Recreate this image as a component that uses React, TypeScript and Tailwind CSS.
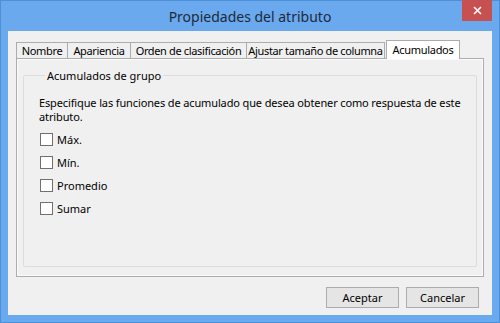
import React from "react";

const font = { fontFamily: '"Noto Sans", "Open Sans", sans-serif' };

function Tab({ label, w, selected }: { label: string; w: string; selected?: boolean }) {
  if (selected) {
    return (
      <div className={`relative z-10 -mb-[1px] ml-[1px] flex h-[19px] items-start justify-center whitespace-nowrap border border-b-0 border-[#acacac] bg-white pt-[1px] tracking-[-0.3px] ${w}`}>
        <span>{label}</span>
      </div>
    );
  }
  return (
    <div className={`-ml-[1px] flex h-[16px] items-center justify-center whitespace-nowrap border border-b-0 border-[#acacac] bg-[#f0f0f0] tracking-[-0.35px] first:ml-0 ${w}`}>
      <span>{label}</span>
    </div>
  );
}

function Check({ label }: { label: string }) {
  return (
    <div className="flex h-[23px] items-center gap-[4px]">
      <div className="h-[13px] w-[13px] border border-[#707070] bg-white" />
      <span>{label}</span>
    </div>
  );
}

export default function App() {
  return (
    <div
      className="flex h-[323px] w-[500px] flex-col border border-[#4d8fd9] bg-[#6aa9ee] text-[11px] leading-[15px] text-black"
      style={font}
    >
      <div className="relative flex h-[30px] items-center justify-center">
        <span className="text-[14px] text-[#1e2a38]">Propiedades del atributo</span>
        <div className="absolute right-[7px] top-[-1px] flex h-[21px] w-[30px] items-center justify-center bg-[#c75050]">
          <svg width="9" height="9" viewBox="0 0 9 9">
            <path d="M1 1 L8 8 M8 1 L1 8" stroke="white" strokeWidth="1.6" />
          </svg>
        </div>
      </div>
      <div className="mx-[7px] flex flex-1 flex-col bg-[#f0f0f0] px-[8px] pt-[9px]">
        <div className="flex h-[18px] items-end">
          <Tab label="Nombre" w="w-[52px]" />
          <Tab label="Apariencia" w="w-[64px]" />
          <Tab label="Orden de clasificación" w="w-[117px]" />
          <Tab label="Ajustar tamaño de columna" w="w-[139px]" />
          <Tab label="Acumulados" w="w-[74px]" selected />
        </div>
        <div className="h-[219px] border border-[#acacac] bg-[#f0f0f0] px-[6px] pb-[9px] pt-[9px] shadow-[inset_0_0_0_1px_#fbfbfb]">
          <fieldset className="h-full rounded-[2px] border border-[#dcdcdc] pl-[15px]">
            <legend className="ml-[6px] whitespace-nowrap px-[2px] leading-[15px]">Acumulados de grupo</legend>
            <p className="mt-[13px] whitespace-nowrap leading-[14px] tracking-[-0.13px]">
              Especifique las funciones de acumulado que desea obtener como respuesta de este
              <br />
              atributo.
            </p>
            <div className="mt-[4px] flex flex-col pl-[1px]">
              <Check label="Máx." />
              <Check label="Mín." />
              <Check label="Promedio" />
              <Check label="Sumar" />
            </div>
          </fieldset>
        </div>
        <div className="flex justify-end gap-[7px] pr-[5px] pt-[10px]">
          <button className="flex h-[21px] w-[73px] items-center justify-center border border-[#acacac] bg-[#e5e5e5]">
            Aceptar
          </button>
          <button className="flex h-[21px] w-[73px] items-center justify-center border border-[#acacac] bg-[#e5e5e5]">
            Cancelar
          </button>
        </div>
      </div>
      <div className="h-[7px]" />
    </div>
  );
}
